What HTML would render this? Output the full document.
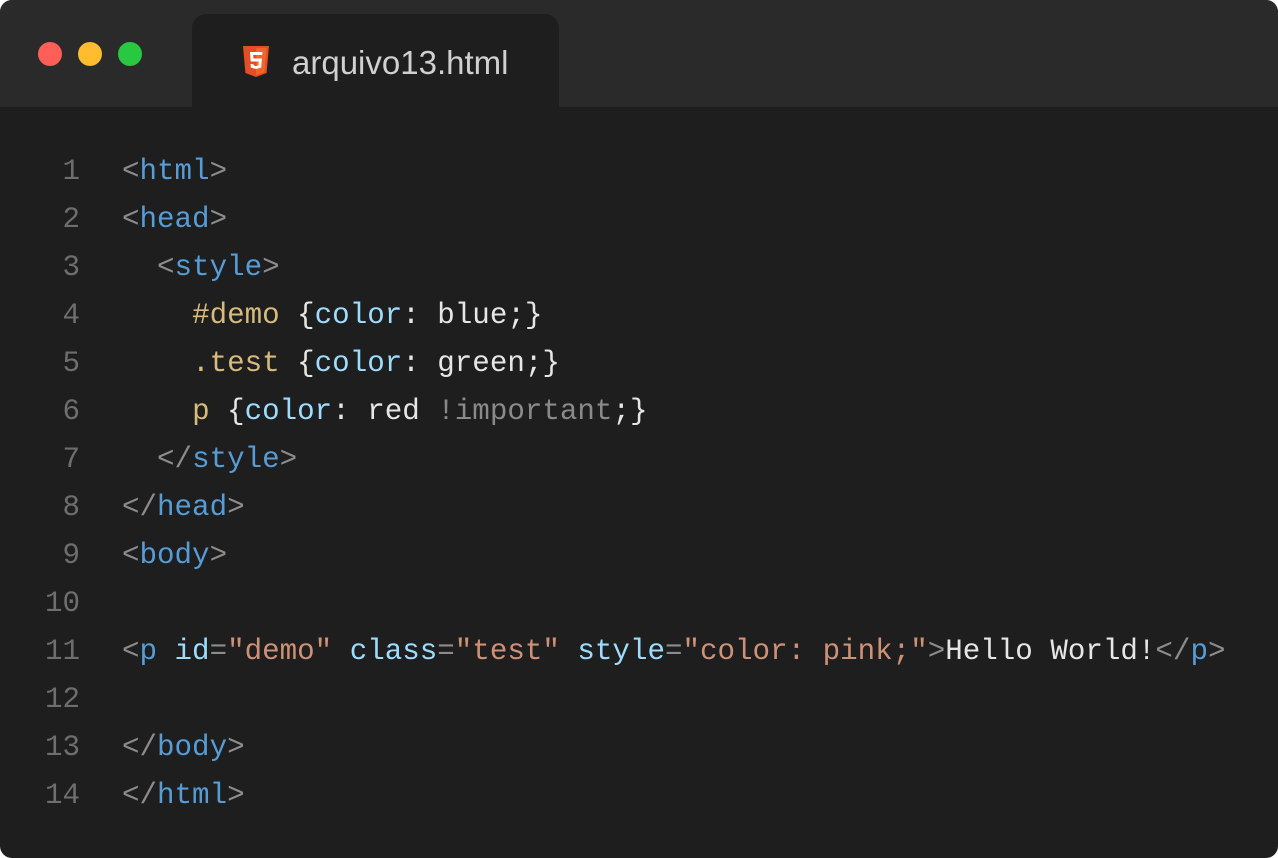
<!DOCTYPE html>
<html><head><style>
html,body{margin:0;padding:0;background:#fff;}
.win{position:absolute;left:0;top:0;width:1278px;height:858px;background:#1e1e1e;border-radius:12px;overflow:hidden;}
.bar{position:absolute;left:0;top:0;width:1278px;height:107px;background:#2a2a2a;}
.dot{position:absolute;top:42px;width:24px;height:24px;border-radius:50%;}
.tab{position:absolute;left:192px;top:14px;width:367px;height:93px;background:#1e1e1e;border-radius:14px 14px 0 0;}
.tab span{position:absolute;left:100px;top:30px;font:33px "Liberation Sans",sans-serif;color:#d0d0d0;}
.code{position:absolute;top:148px;left:0;font-family:"Liberation Mono",monospace;font-size:29.2px;line-height:48px;white-space:pre;color:#e6e6e6;}
.ln{position:absolute;left:0;width:80px;text-align:right;color:#6e6e6e;}
.c{position:absolute;left:122px;}
.b{color:#8c8c8c}.t{color:#569cd6}.a{color:#9cdcfe}.s{color:#ce9178}.y{color:#d7ba7d}.g{color:#8a8a8a}
</style></head><body>
<div class="win">
<div class="bar"></div>
<div class="dot" style="left:38px;background:#ff5f57"></div>
<div class="dot" style="left:78px;background:#febc2e"></div>
<div class="dot" style="left:118px;background:#28c840"></div>
<div class="tab">
<svg style="position:absolute;left:51px;top:32px" width="26" height="31" viewBox="0 0 26 31"><path d="M0 0H26L23.6 27 13 31 2.4 27Z" fill="#e44d26"/><path d="M13 2V29L21.5 26.4 23.6 2Z" fill="#f16529"/><path d="M7 6H19.5L19.2 9H10.2L10.5 12.5H18.9L18.2 21.5 13 23 7.8 21.5 7.5 18H10.4L10.6 19.4 13 20.1 15.4 19.4 15.7 15.5H7.7Z" fill="#fff"/></svg>
<span>arquivo13.html</span></div>
<div class="code">
<div class="ln" style="top:0">1</div><div class="ln" style="top:48px">2</div><div class="ln" style="top:96px">3</div><div class="ln" style="top:144px">4</div><div class="ln" style="top:192px">5</div><div class="ln" style="top:240px">6</div><div class="ln" style="top:288px">7</div><div class="ln" style="top:336px">8</div><div class="ln" style="top:384px">9</div><div class="ln" style="top:432px">10</div><div class="ln" style="top:480px">11</div><div class="ln" style="top:528px">12</div><div class="ln" style="top:576px">13</div><div class="ln" style="top:624px">14</div>
<div class="c" style="top:0"><span class="b">&lt;</span><span class="t">html</span><span class="b">&gt;</span></div>
<div class="c" style="top:48px"><span class="b">&lt;</span><span class="t">head</span><span class="b">&gt;</span></div>
<div class="c" style="top:96px">  <span class="b">&lt;</span><span class="t">style</span><span class="b">&gt;</span></div>
<div class="c" style="top:144px">    <span class="y">#demo</span> {<span class="a">color</span>: blue;}</div>
<div class="c" style="top:192px">    <span class="y">.test</span> {<span class="a">color</span>: green;}</div>
<div class="c" style="top:240px">    <span class="y">p</span> {<span class="a">color</span>: red <span class="g">!important</span>;}</div>
<div class="c" style="top:288px">  <span class="b">&lt;/</span><span class="t">style</span><span class="b">&gt;</span></div>
<div class="c" style="top:336px"><span class="b">&lt;/</span><span class="t">head</span><span class="b">&gt;</span></div>
<div class="c" style="top:384px"><span class="b">&lt;</span><span class="t">body</span><span class="b">&gt;</span></div>
<div class="c" style="top:480px"><span class="b">&lt;</span><span class="t">p</span> <span class="a">id</span><span class="b">=</span><span class="s">"demo"</span> <span class="a">class</span><span class="b">=</span><span class="s">"test"</span> <span class="a">style</span><span class="b">=</span><span class="s">"color: pink;"</span><span class="b">&gt;</span>Hello World!<span class="b">&lt;/</span><span class="t">p</span><span class="b">&gt;</span></div>
<div class="c" style="top:576px"><span class="b">&lt;/</span><span class="t">body</span><span class="b">&gt;</span></div>
<div class="c" style="top:624px"><span class="b">&lt;/</span><span class="t">html</span><span class="b">&gt;</span></div>
</div>
</div>
</body></html>
